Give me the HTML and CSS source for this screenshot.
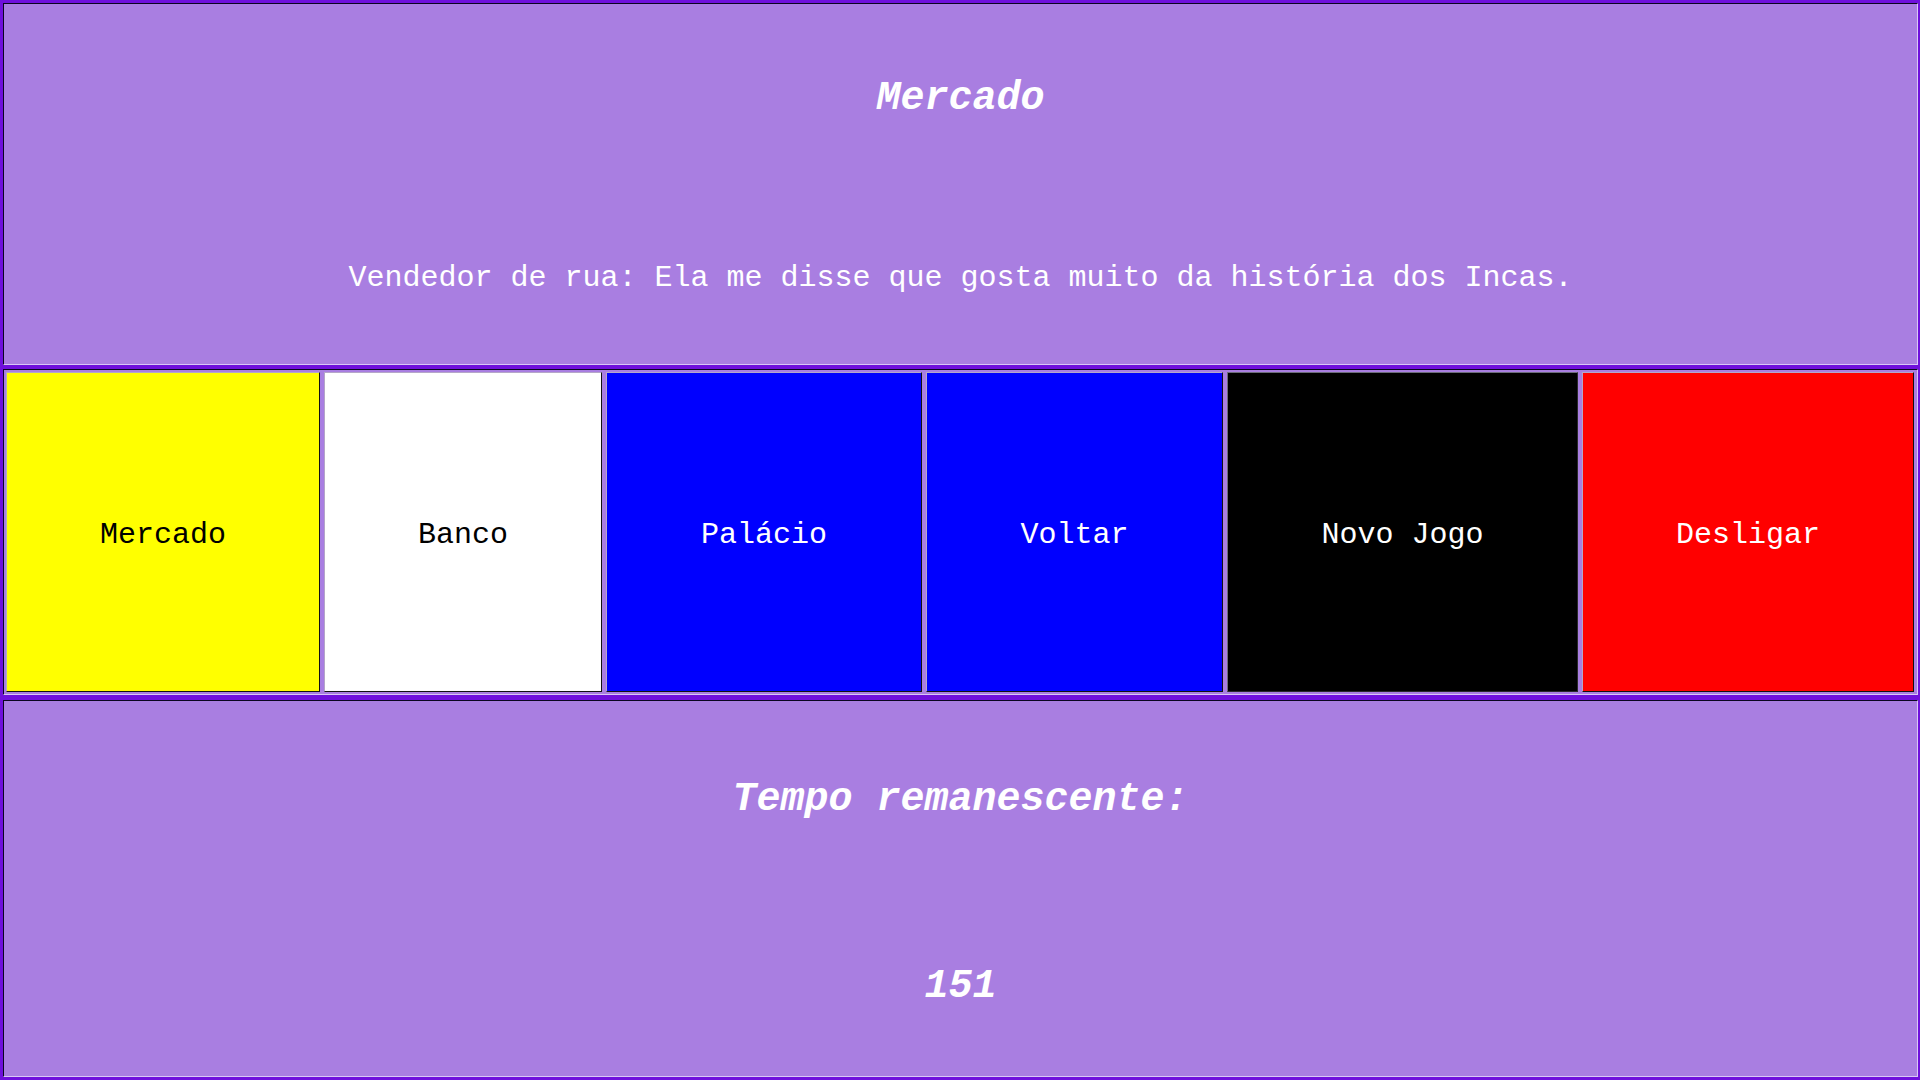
FILE: index.html
```html
<!DOCTYPE html>
<html lang="pt">
<head>
<meta charset="utf-8">
<title>Mercado</title>
<link rel="stylesheet" href="styles.css">
</head>
<body>
<div class="page">
  <section class="panel panel-top">
    <div class="row"><h1 class="title">Mercado</h1></div>
    <div class="row"><p class="message">Vendedor de rua: Ela me disse que gosta muito da história dos Incas.</p></div>
  </section>
  <section class="panel panel-nav">
    <div class="btn btn-yellow w1">Mercado</div>
    <div class="btn btn-white w2">Banco</div>
    <div class="btn btn-blue w3">Palácio</div>
    <div class="btn btn-blue w4">Voltar</div>
    <div class="btn btn-black w5">Novo Jogo</div>
    <div class="btn btn-red w6">Desligar</div>
  </section>
  <section class="panel panel-bottom">
    <div class="row"><h2 class="title">Tempo remanescente:</h2></div>
    <div class="row"><h2 class="title">151</h2></div>
  </section>
</div>
</body>
</html>
```

FILE: styles.css
```css
html, body {
  margin: 0;
  padding: 0;
}
body {
  background: #6f10dc;
  width: 1920px;
  height: 1080px;
  overflow: hidden;
  font-family: "Liberation Mono", "DejaVu Sans Mono", monospace;
}
.page {
  box-sizing: border-box;
  height: 1080px;
  padding: 3px 2px 3px 3px;
  display: flex;
  flex-direction: column;
}
.panel {
  box-sizing: border-box;
  background: #a97ee1;
  border-style: solid;
  border-width: 1px;
  border-color: #0a0420 #d9c7f6 #d9c7f6 #0a0420;
}
.panel-top {
  height: 362px;
  display: grid;
  grid-template-rows: 1fr 1fr;
}
.panel-nav {
  margin-top: 4px;
  height: 326px;
  padding: 2px;
  display: flex;
  gap: 4px;
}
.panel-bottom {
  margin-top: 5px;
  height: 377px;
  display: grid;
  grid-template-rows: 1fr 1fr;
}
.row {
  display: flex;
  align-items: center;
  justify-content: center;
}
.title {
  margin: 0;
  padding-top: 10px;
  font-size: 40px;
  font-weight: bold;
  font-style: italic;
  color: #ffffff;
  line-height: 1.2;
}
.message {
  margin: 0;
  padding-top: 8px;
  font-size: 30px;
  color: #ffffff;
  line-height: 1.2;
}
.btn {
  box-sizing: border-box;
  display: flex;
  align-items: center;
  justify-content: center;
  padding-top: 5px;
  font-size: 30px;
  border-style: solid;
  border-width: 1px;
  border-color: #b5a6c9 #111111 #111111 #b5a6c9;
}
.w1 { width: 314px; }
.w2 { width: 278px; }
.w3 { width: 316px; }
.w4 { width: 297px; }
.w5 { width: 351px; }
.w6 { width: 332px; }
.btn-yellow { background: #ffff00; color: #000000; }
.btn-white { background: #ffffff; color: #000000; }
.btn-blue { background: #0000ff; color: #ffffff; }
.btn-black { background: #000000; color: #ffffff; border-color: #6d6d7a #2a2a2a #2a2a2a #6d6d7a; }
.btn-red { background: #ff0000; color: #ffffff; }
```
